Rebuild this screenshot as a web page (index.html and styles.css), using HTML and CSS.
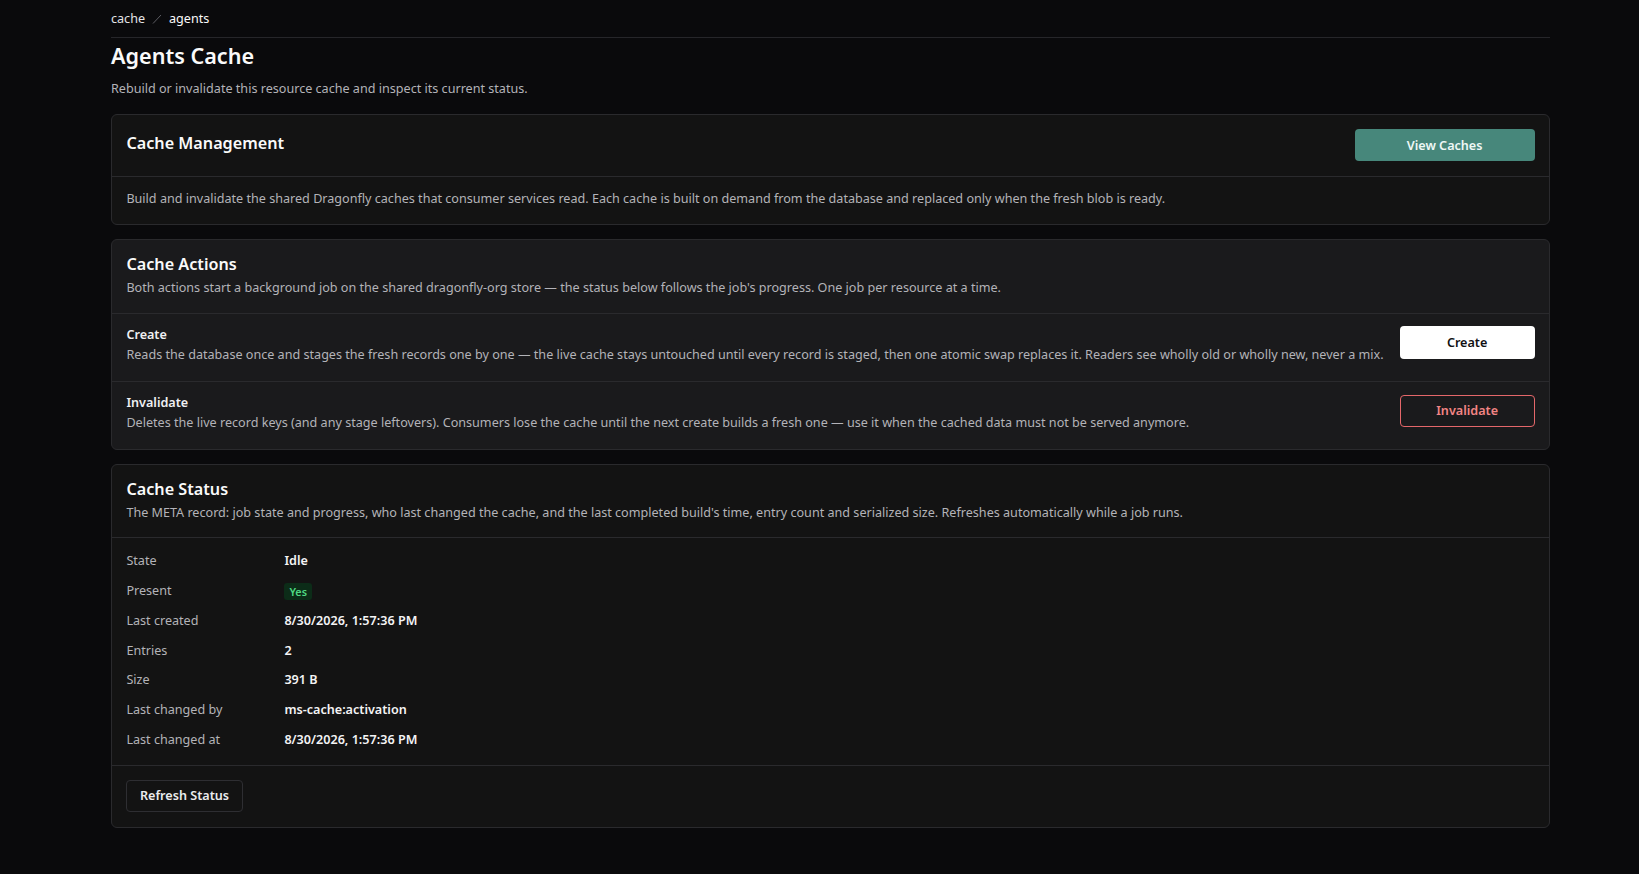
FILE: index.html
```html
<!DOCTYPE html>
<html lang="en">
<head>
    <meta charset="UTF-8">
    <title>Agents Cache</title>
    <link rel="stylesheet" href="styles.css">
</head>
<body>
    <main class="page">
        <nav class="crumbs">
            <a href="#" class="crumb">cache</a>
            <svg class="crumb-sep" width="10" height="10" viewBox="0 0 10 10"><line x1="1" y1="9.5" x2="9" y2="1" stroke="#5c5c62" stroke-width="1"/></svg>
            <span class="crumb current">agents</span>
        </nav>

        <h1 class="page-title">Agents Cache</h1>
        <p class="page-lead">Rebuild or invalidate this resource cache and inspect its current status.</p>

        <div class="cards">
            <!-- Management -->
            <section class="card">
                <div class="card-head card-head-split">
                    <h2 class="card-title card-title-top">Cache Management</h2>
                    <button class="btn btn-teal">View Caches</button>
                </div>
                <div class="card-body">
                    <p class="card-text">Build and invalidate the shared Dragonfly caches that consumer services read. Each cache is built on demand from the database and replaced only when the fresh blob is ready.</p>
                </div>
            </section>

            <!-- Actions -->
            <section class="card card-raised">
                <div class="card-head">
                    <h2 class="card-title">Cache Actions</h2>
                    <p class="card-text card-sub">Both actions start a background job on the shared dragonfly-org store — the status below follows the job's progress. One job per resource at a time.</p>
                </div>
                <div class="action-row">
                    <div class="action-info">
                        <h3 class="action-name">Create</h3>
                        <p class="card-text">Reads the database once and stages the fresh records one by one — the live cache stays untouched until every record is staged, then one atomic swap replaces it. Readers see wholly old or wholly new, never a mix.</p>
                    </div>
                    <button class="btn btn-light">Create</button>
                </div>
                <div class="action-row">
                    <div class="action-info">
                        <h3 class="action-name">Invalidate</h3>
                        <p class="card-text">Deletes the live record keys (and any stage leftovers). Consumers lose the cache until the next create builds a fresh one — use it when the cached data must not be served anymore.</p>
                    </div>
                    <button class="btn btn-danger">Invalidate</button>
                </div>
            </section>

            <!-- Status -->
            <section class="card">
                <div class="card-head">
                    <h2 class="card-title">Cache Status</h2>
                    <p class="card-text card-sub">The META record: job state and progress, who last changed the cache, and the last completed build's time, entry count and serialized size. Refreshes automatically while a job runs.</p>
                </div>
                <dl class="status-grid">
                    <dt>State</dt>
                    <dd>Idle</dd>
                    <dt>Present</dt>
                    <dd><span class="badge badge-ok">Yes</span></dd>
                    <dt>Last created</dt>
                    <dd>8/30/2026, 1:57:36 PM</dd>
                    <dt>Entries</dt>
                    <dd>2</dd>
                    <dt>Size</dt>
                    <dd>391 B</dd>
                    <dt>Last changed by</dt>
                    <dd>ms-cache:activation</dd>
                    <dt>Last changed at</dt>
                    <dd>8/30/2026, 1:57:36 PM</dd>
                </dl>
                <div class="card-foot">
                    <button class="btn btn-outline">Refresh Status</button>
                </div>
            </section>
        </div>
    </main>
</body>
</html>
```

FILE: styles.css
```css
:root {
    --bg: #0a0a0c;
    --card: #131313;
    --card-raised: #1a1a1c;
    --border: #2a2a2d;
    --text: #f2f2f3;
    --muted: #b3b3b8;
    --teal: #47877b;
    --red: #e4676a;
}

body {
    margin: 0;
    background: var(--bg);
    color: var(--text);
    font-family: "Noto Sans", "DejaVu Sans", sans-serif;
}

.page {
    width: 1439px;
    margin: 0 0 0 111px;
    padding-bottom: 40px;
}

.crumbs {
    display: flex;
    align-items: center;
    gap: 7px;
    padding: 10px 0 9px;
    border-bottom: 1px solid #26262a;
    font-size: 12.6px;
    line-height: 18px;
}

.crumb {
    color: #e4e4e6;
    text-decoration: none;
}

.crumb.current {
    color: #fafafa;
}

.page-title {
    margin: 4px 0 0;
    font-size: 21.6px;
    line-height: 28.8px;
    font-weight: 600;
    color: #fafafa;
}

.page-lead {
    margin: 9.4px 0 16px;
    font-size: 12.6px;
    line-height: 18px;
    color: var(--muted);
}

.cards {
    display: flex;
    flex-direction: column;
    gap: 14px;
}

.card {
    background: var(--card);
    border: 1px solid var(--border);
    border-radius: 6px;
}

.card-raised {
    background: var(--card-raised);
}

.card-head {
    padding: 13.8px 14.4px 15.5px;
    border-bottom: 1px solid var(--border);
}

.card-head-split {
    display: flex;
    justify-content: space-between;
    align-items: flex-start;
    padding: 13.9px 14.4px 14.9px;
}

.card-title {
    margin: 0;
    font-size: 16.2px;
    line-height: 21.6px;
    font-weight: 600;
    color: #fafafa;
}

.card-title-top {
    margin-top: 1.5px;
    line-height: 25.2px;
}

.card-text {
    margin: 0;
    font-size: 12.6px;
    line-height: 18px;
    color: var(--muted);
}

.card-sub {
    margin-top: 3.6px;
}

.card-body {
    padding: 12.5px 14.4px 16.5px;
}

.action-row {
    display: flex;
    align-items: center;
    gap: 12px;
    padding: 12.5px 14.4px 17px;
    border-bottom: 1px solid var(--border);
}

.action-row:last-child {
    border-bottom: none;
}

.action-row .btn {
    margin-bottom: 5px;
}

.action-info {
    flex: 1;
}

.action-name {
    margin: 0 0 1.5px;
    font-size: 12.6px;
    line-height: 18px;
    font-weight: 600;
    color: #f0f0f2;
}

.btn {
    font-family: inherit;
    font-size: 12.6px;
    font-weight: 600;
    border-radius: 4px;
    cursor: pointer;
    flex-shrink: 0;
}

.btn-teal {
    width: 180px;
    height: 32.4px;
    background: var(--teal);
    color: #eef8f6;
    border: none;
}

.btn-light {
    width: 135px;
    height: 32.4px;
    background: #ffffff;
    color: #111113;
    border: none;
}

.btn-danger {
    width: 135px;
    height: 32px;
    background: transparent;
    color: #f28585;
    border: 1px solid var(--red);
}

.btn-outline {
    height: 32.4px;
    padding: 0 12.6px;
    background: transparent;
    color: #ececee;
    border: 1px solid #2e2e32;
}

.status-grid {
    display: grid;
    grid-template-columns: 158px 1fr;
    row-gap: 11.7px;
    margin: 0;
    padding: 14px 14.4px 16px;
    border-bottom: 1px solid var(--border);
    font-size: 12.6px;
    line-height: 18px;
}

.status-grid dt {
    color: var(--muted);
}

.status-grid dd {
    margin: 0;
    font-weight: 600;
    color: #f4f4f5;
}

.badge {
    display: inline-block;
    padding: 0 5px;
    font-size: 10.8px;
    line-height: 17.4px;
    border-radius: 3px;
    vertical-align: middle;
}

.badge-ok {
    background: #0c2c18;
    color: #4fd883;
}

.card-foot {
    padding: 14px 14.4px 14.4px;
}
```
